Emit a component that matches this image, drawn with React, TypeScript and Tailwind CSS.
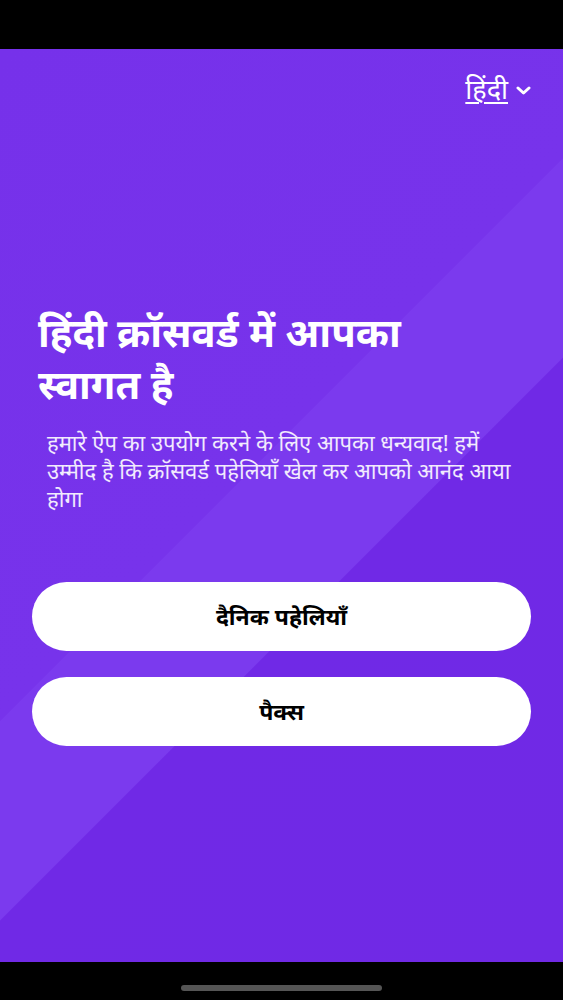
const font = { fontFamily: '"Noto Sans", "Noto Sans Devanagari", sans-serif' };

export default function App() {
  return (
    <div className="flex h-[1000px] w-[563px] flex-col bg-black" style={font}>
      {/* status bar area */}
      <div className="h-[49px] shrink-0 bg-black" />

      <main className="flex flex-1 flex-col bg-[linear-gradient(135deg,#7631ea_0%,#7733eb_45.5%,#7b3aee_45.6%,#7b3aee_59%,#7029e6_59.1%,#7029e5_100%)]">
        <div className="flex justify-end pr-[32px] pt-[22px]">
          <button className="flex items-center gap-[8px] text-[27px] leading-[36px] text-white">
            <span className="underline decoration-2 underline-offset-[3px]">हिंदी</span>
            <svg className="mt-[2px] h-[9px] w-[15px]" viewBox="0 0 15 9" fill="none">
              <path
                d="M2 2l5.5 5 5.5-5"
                stroke="currentColor"
                strokeWidth={3}
                strokeLinecap="round"
                strokeLinejoin="round"
              />
            </svg>
          </button>
        </div>

        <section className="mt-[199px] px-[38px]">
          <h1 className="max-w-[420px] text-[40px] font-bold leading-[52px] text-white">
            हिंदी क्रॉसवर्ड में आपका स्वागत है
          </h1>
          <p className="mt-[18px] max-w-[475px] pl-[9px] text-[22px] leading-[28px] text-white/90">
            हमारे ऐप का उपयोग करने के लिए आपका धन्यवाद! हमें उम्मीद है कि क्रॉसवर्ड पहेलियाँ खेल कर आपको आनंद आया होगा
          </p>
        </section>

        <div className="mt-[70px] flex flex-col gap-[26px] px-[32px]">
          <button className="h-[69px] w-full rounded-full bg-white text-[23px] font-bold text-black">
            दैनिक पहेलियाँ
          </button>
          <button className="h-[69px] w-full rounded-full bg-white text-[23px] font-bold text-black">
            पैक्स
          </button>
        </div>
      </main>

      <div className="flex h-[38px] shrink-0 items-start justify-center bg-black pt-[23px]">
        <div className="h-[6px] w-[201px] rounded-full bg-[#555555]" />
      </div>
    </div>
  );
}
